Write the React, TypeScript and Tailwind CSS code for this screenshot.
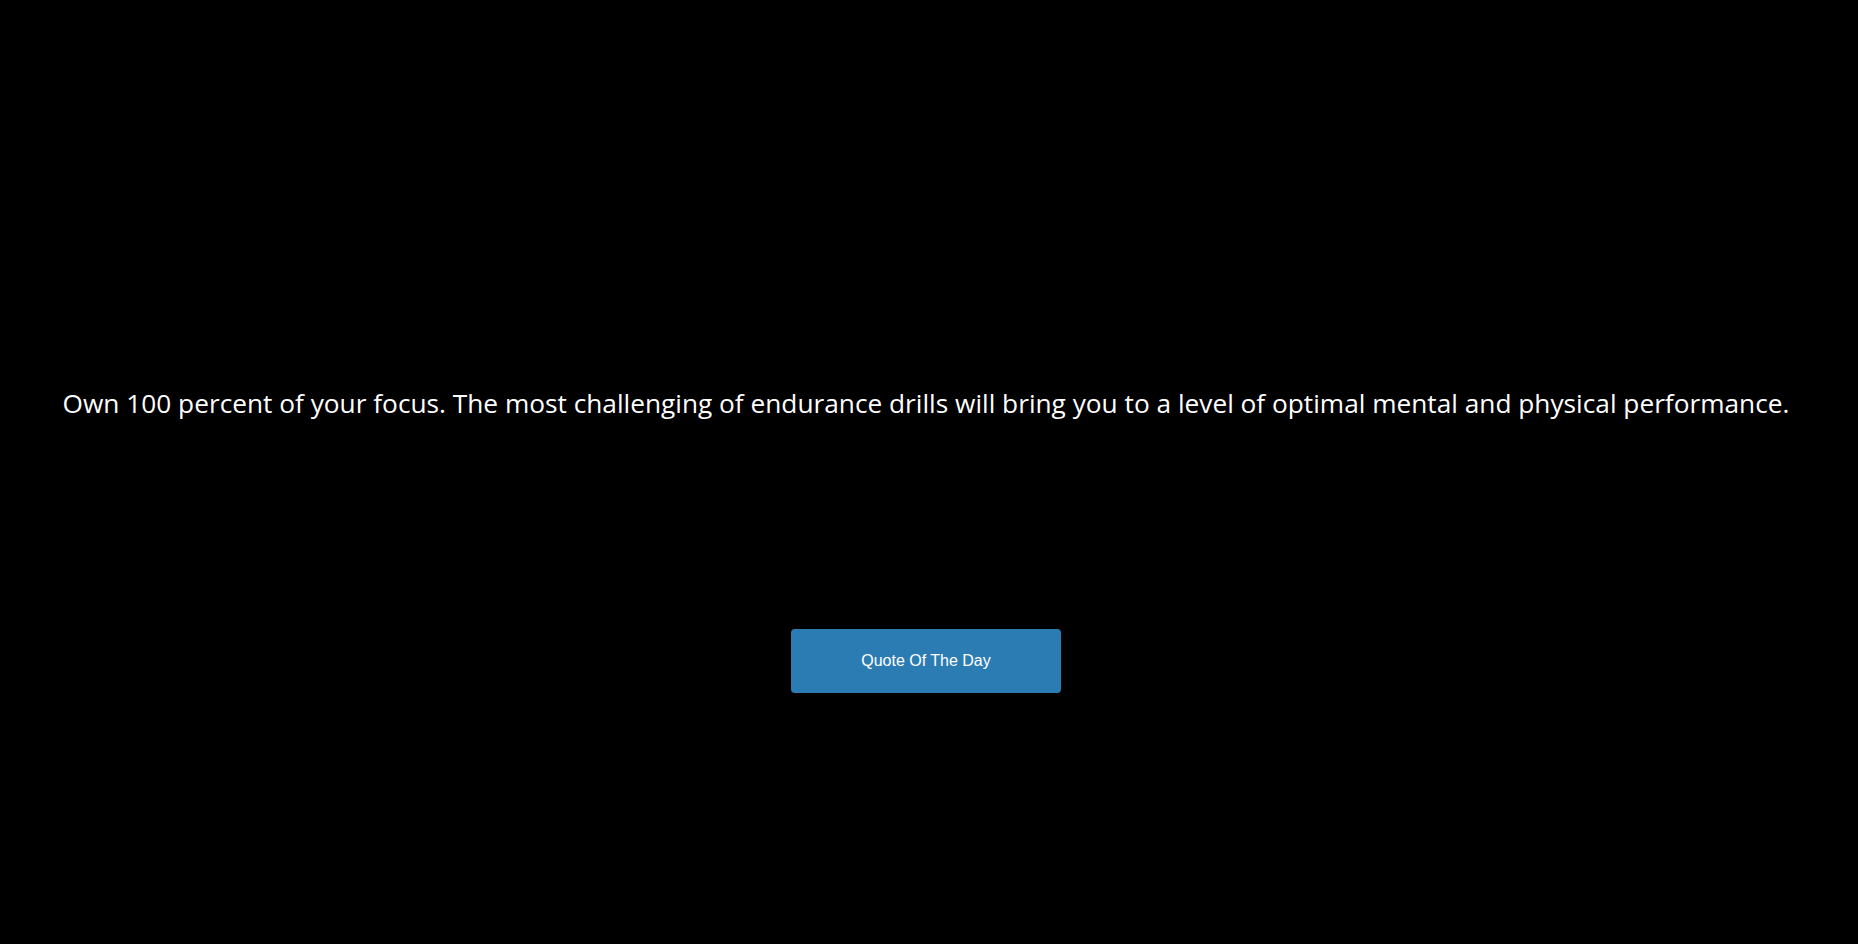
export default function App() {
  return (
    <div className="min-h-screen w-full bg-black flex flex-col items-center pr-[6px]">
      <div className="h-[383px] shrink-0" />
      <p
        className="h-[40px] leading-[40px] text-[26.25px] text-white text-center whitespace-nowrap"
        style={{ fontFamily: '"Open Sans", "Noto Sans", sans-serif' }}
      >
        Own 100 percent of your focus. The most challenging of endurance drills will bring you to a level of optimal mental and physical performance.
      </p>
      <div className="h-[206px] shrink-0" />
      <button
        className="w-[270px] h-[64px] rounded-[4px] bg-[#2c7cb4] text-white text-[16px]"
        style={{ fontFamily: '"Liberation Sans", Arial, sans-serif' }}
      >
        Quote Of The Day
      </button>
    </div>
  );
}
